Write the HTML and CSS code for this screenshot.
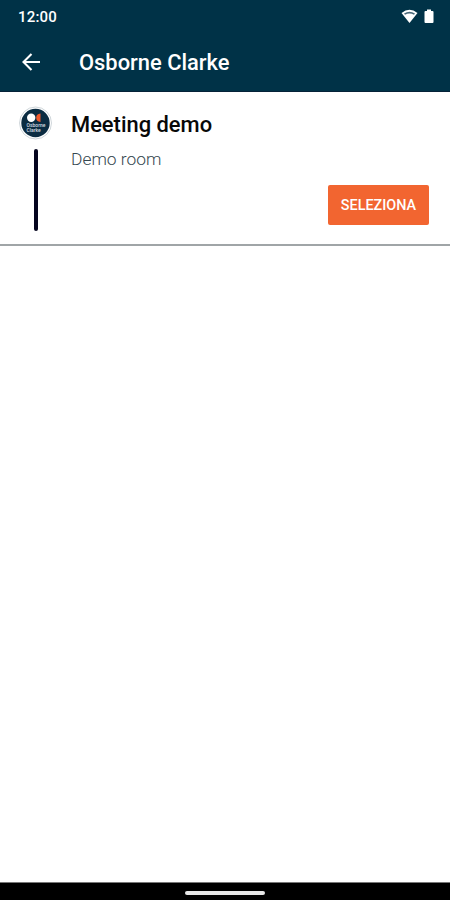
FILE: index.html
```html
<!DOCTYPE html>
<html lang="it">
<head>
<meta charset="utf-8">
<meta name="viewport" content="width=device-width, initial-scale=1">
<title>Osborne Clarke</title>
<link rel="stylesheet" href="styles.css">
</head>
<body>
<div class="screen">
  <header class="header">
    <div class="status">
      <span class="time">12:00</span>
      <div class="status-icons">
        <svg width="17" height="15" viewBox="0 0 17 15"><path d="M.5 4Q8.500-2.600 16.500 4L8.500 14Z" fill="#fff"/><path d="M3 4.500Q8.500 1 14 4.500L13 5.700Q8.500 3.400 4 5.700Z" fill="#496879"/></svg>
        <svg width="10" height="15" viewBox="0 0 10 15"><path d="M3 .5h4V2h1.500q1 0 1 1v10q0 1-1 1h-7q-1 0-1-1V3q0-1 1-1H3Z" fill="#fff"/></svg>
      </div>
    </div>
    <div class="toolbar">
      <svg class="back" width="20" height="20" viewBox="0 0 20 20"><path d="M19 10H3M10.500 2L2.500 10l8 8" fill="none" stroke="#fff" stroke-width="2.100"/></svg>
      <h1 class="title">Osborne Clarke</h1>
    </div>
  </header>
  <main class="content">
    <article class="meeting">
      <div class="rail">
        <svg class="logo" width="34" height="34" viewBox="0 0 34 34">
          <circle cx="16.500" cy="17" r="16" fill="#fff" stroke="#c3cbd0" stroke-width=".8"/>
          <circle cx="16.500" cy="17" r="14.200" fill="#0b2c42"/>
          <circle cx="12.200" cy="11.700" r="4.200" fill="#fff"/>
          <path d="M21.500 7.500v8.500q-4.300-.5-4.300-4.300t4.300-4.200Z" fill="#f1592b"/>
          <text class="logo-text" x="7.500" y="21.400">Osborne</text>
          <text class="logo-text" x="7.500" y="25.900">Clarke</text>
        </svg>
        <div class="line"></div>
      </div>
      <div class="details">
        <h2 class="name">Meeting demo</h2>
        <p class="room">Demo room</p>
        <button class="select">SELEZIONA</button>
      </div>
    </article>
  </main>
  <footer class="navbar"><div class="handle"></div></footer>
</div>
</body>
</html>
```
FILE: styles.css
```css
* { box-sizing: border-box; }
body { margin: 0; font-family: Roboto, "Liberation Sans", sans-serif; background: #fff; }
.screen { display: flex; flex-direction: column; height: 900px; }
.header { height: 92px; background: #003247; color: #fff; border-bottom: 1px solid #062238; }
.status { display: flex; justify-content: space-between; align-items: center; height: 32px; padding: 0 16px 0 18px; }
.time { font-size: 15px; font-weight: 500; letter-spacing: .2px; padding-top: 1px; }
.status-icons { display: flex; gap: 6px; }
.status svg, .back, .logo { display: block; }
.toolbar { display: flex; align-items: center; height: 60px; padding-left: 21px; gap: 38px; }
.title { margin: 2px 0 0; font-size: 21.9px; font-weight: 500; line-height: 28px; }
.content { flex: 1; }
.meeting { display: flex; height: 154px; border-bottom: 2px solid #a0a5a7; }
.rail { display: flex; flex-direction: column; align-items: center; width: 71px; padding-top: 14px; }
.logo-text { font-size: 5px; font-weight: 500; fill: #d5dce1; }
.line { width: 4px; height: 82px; margin-top: 9px; border-radius: 2px; background: #05051f; }
.details { flex: 1; display: flex; flex-direction: column; padding: 18px 21px 0 0; }
.name { margin: 0; font-size: 21.9px; font-weight: 500; line-height: 30px; color: #080808; }
.room { margin: 8px 0 0; font-size: 17.4px; font-weight: 300; line-height: 22px; color: #35474f; }
.select { align-self: flex-end; width: 101px; height: 40px; margin-top: 15px; padding: 1px 0 0; border: 0; border-radius: 2px; background: #f26530; color: #fff; font: 500 14.4px/39px Roboto, sans-serif; }
.navbar { display: flex; justify-content: center; align-items: center; height: 18px; padding-top: 2px; background: #000; border-top: 1px solid #777; }
.handle { width: 80px; height: 4px; border-radius: 2px; background: #e8e8e8; }
```
